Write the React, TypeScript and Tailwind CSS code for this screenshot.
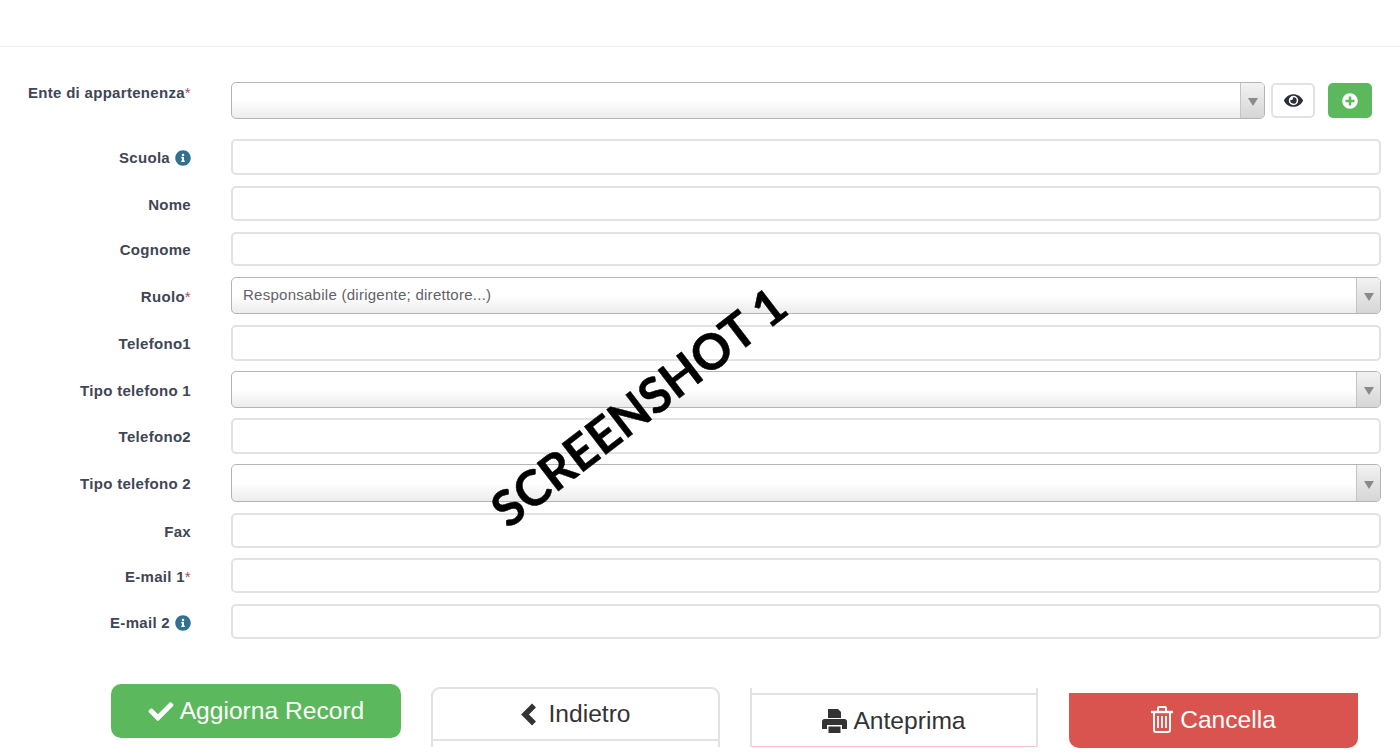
import { FaCheck, FaEye, FaInfoCircle, FaPlusCircle } from "react-icons/fa";

type RowDef = {
  label: string;
  kind: "input" | "select";
  height: string;
  margin: string;
  required?: boolean;
  info?: boolean;
  value?: string;
};

const rows: RowDef[] = [
  { label: "Scuola", kind: "input", height: "h-[36px]", margin: "mt-0", info: true },
  { label: "Nome", kind: "input", height: "h-[35px]", margin: "mt-[11px]" },
  { label: "Cognome", kind: "input", height: "h-[34px]", margin: "mt-[11px]" },
  { label: "Ruolo", kind: "select", height: "h-[37px]", margin: "mt-[11px]", required: true, value: "Responsabile (dirigente; direttore...)" },
  { label: "Telefono1", kind: "input", height: "h-[36px]", margin: "mt-[11px]" },
  { label: "Tipo telefono 1", kind: "select", height: "h-[37px]", margin: "mt-[10px]" },
  { label: "Telefono2", kind: "input", height: "h-[36px]", margin: "mt-[10px]" },
  { label: "Tipo telefono 2", kind: "select", height: "h-[38px]", margin: "mt-[10px]" },
  { label: "Fax", kind: "input", height: "h-[35px]", margin: "mt-[11px]" },
  { label: "E-mail 1", kind: "input", height: "h-[35px]", margin: "mt-[10px]", required: true },
  { label: "E-mail 2", kind: "input", height: "h-[35px]", margin: "mt-[11px]", info: true },
];

function Asterisk() {
  return <span className="text-[#b5475f] font-normal">*</span>;
}

function SelectBox({ value, className }: { value?: string; className: string }) {
  return (
    <div className={`flex overflow-hidden rounded-[5px] border-[1.5px] border-[#b4b4b4] bg-gradient-to-b from-white from-50% to-[#ececec] ${className}`}>
      <div className="flex-1 pl-[11px] pt-[8px] text-[15px] leading-[18px] tracking-[0.26px] text-[#5f6368]">{value}</div>
      <div className="flex w-[24px] items-center justify-center border-l-[1.5px] border-[#c4c4c4] bg-gradient-to-b from-[#f2f2f2] to-[#d6d6d6]">
        <div className="mt-[3px] h-0 w-0 border-x-[5px] border-t-[8px] border-x-transparent border-t-[#8a8a8a]" />
      </div>
    </div>
  );
}

function TrashIcon() {
  return (
    <svg width="22" height="27" viewBox="0 0 22 27" fill="none" stroke="white" strokeWidth="2">
      <path d="M0 6h22" strokeWidth="2.4" />
      <path d="M7 5V2.2C7 1.5 7.5 1 8.2 1h5.6c.7 0 1.2.5 1.2 1.2V5" />
      <path d="M3 6v18c0 1.2.8 2 2 2h12c1.2 0 2-.8 2-2V6" />
      <path d="M7 10v12M11 10v12M15 10v12" strokeWidth="1.8" />
    </svg>
  );
}

function ChevronIcon() {
  return (
    <svg width="17" height="23" viewBox="0 0 17 23" fill="none" stroke="#333333" strokeWidth="5.5">
      <path d="M14 2.5 5 11.5l9 9" />
    </svg>
  );
}

function PrintIcon() {
  return (
    <svg width="25" height="26" viewBox="0 0 25 26" fill="#333333">
      <path d="M6 1h10l3 3v6H6z" />
      <path d="M2.500 11h20c1.400 0 2.500 1.100 2.500 2.500V21h-5v-4H5v4H0v-7.500C0 12.100 1.100 11 2.500 11z" />
      <path d="M6.500 18.500h12V25h-12z" />
    </svg>
  );
}

export default function App() {
  return (
    <div className="relative h-[754px] w-[1400px] overflow-hidden bg-white font-['Liberation_Sans',Arial,sans-serif]">
      <div className="h-[47px] border-b border-[#eeeeee]" />

      <div className="pt-[35px]">
        {/* ente row has the two extra buttons */}
        <div className="mb-[20px] flex">
          <div className="w-[191px] shrink-0 pt-[2px] text-right text-[15px] font-bold leading-[18px] tracking-[0.3px] text-[#3f4654]">
            Ente di appartenenza<Asterisk />
          </div>
          <SelectBox className="ml-[40px] h-[37px] w-[1034px]" />
          <button className="ml-[6px] mt-[1px] flex h-[35px] w-[44px] items-center justify-center rounded-[5px] border-2 border-[#e2e2e2] bg-white">
            <FaEye className="h-[19px] w-[19px] text-[#2b2f38]" />
          </button>
          <button className="ml-[13px] mt-[1px] flex h-[35px] w-[44px] items-center justify-center rounded-[5px] bg-[#5cb85c]">
            <FaPlusCircle className="h-[16px] w-[16px] text-white" />
          </button>
        </div>

        {rows.map((row) => (
          <div key={row.label} className={`flex items-center ${row.margin}`}>
            <div className="flex w-[191px] shrink-0 items-center justify-end gap-[5px] pt-[2px] text-[15px] font-bold leading-[18px] tracking-[0.3px] text-[#3f4654]">
              <span>
                {row.label}
                {row.required && <Asterisk />}
              </span>
              {row.info && <FaInfoCircle className="h-[16px] w-[16px] text-[#31708f]" />}
            </div>
            {row.kind === "select" ? (
              <SelectBox value={row.value} className={`ml-[40px] w-[1150px] ${row.height}`} />
            ) : (
              <div className={`ml-[40px] w-[1150px] rounded-[5px] border-2 border-[#e2e2e2] bg-white ${row.height}`} />
            )}
          </div>
        ))}

        <div className="ml-[111px] mt-[45px] flex items-start text-[24.6px] leading-[32px]">
          <button className="flex h-[54px] w-[290px] items-center justify-center gap-[6px] rounded-[10px] bg-[#5cb85c] text-white">
            <FaCheck className="h-[25px] w-[26px]" />
            <span>Aggiorna Record</span>
          </button>

          <div className="ml-[30px] mt-[3px] h-[60px] w-[289px] rounded-t-[9px] border-x-2 border-[#e2e2e2]">
            <button className="-mx-[2px] flex h-[54px] w-[289px] items-center justify-center gap-[11px] rounded-t-[9px] border-2 border-[#e2e2e2] bg-white text-[#333333]">
              <ChevronIcon />
              <span>Indietro</span>
            </button>
          </div>

          <div className="ml-[30px] mt-[4px] h-[59px] w-[288px] border-x-2 border-[#e2e2e2]">
            <div className="mt-[5px] flex h-[54px] items-center justify-center gap-[6px] border-t-2 border-b border-t-[#e2e2e2] border-b-[#f5c4c4] text-[#333333]">
              <PrintIcon />
              <span>Anteprima</span>
            </div>
          </div>

          <button className="ml-[31px] mt-[9px] flex h-[55px] w-[289px] items-center justify-center gap-[7px] rounded-b-[10px] bg-[#d9534f] pb-[2px] text-white">
            <TrashIcon />
            <span>Cancella</span>
          </button>
        </div>
      </div>

      {/* watermark on top of the form */}
      <div className="absolute left-[438px] top-[376px] w-[400px] -rotate-[37.5deg] text-center font-['Lato',sans-serif] text-[49px] font-bold leading-[60px] text-black [-webkit-text-stroke:0.5px_black]">
        SCREENSHOT 1
      </div>
    </div>
  );
}
